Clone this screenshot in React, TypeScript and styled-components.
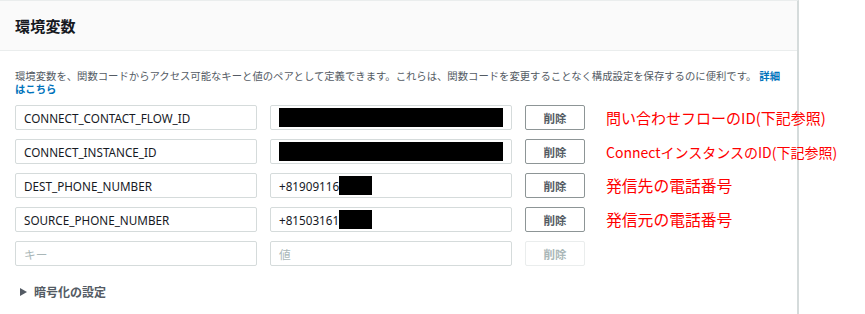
import React from 'react'
import styled, { createGlobalStyle } from 'styled-components'

const GlobalStyle = createGlobalStyle`
  html, body {
    margin: 0;
    padding: 0;
    background: #ffffff;
  }
  body {
    font-family: "Noto Sans", "Noto Sans CJK JP", sans-serif;
    color: #16191f;
  }
`

const Page = styled.div`
  width: 865px;
  height: 314px;
  overflow: hidden;
`

const Panel = styled.section`
  width: 799px;
  height: 314px;
  box-sizing: border-box;
  border-top: 1px solid #eaeded;
  border-right: 2px solid #d5dbdb;
`

const Header = styled.header`
  height: 49px;
  background: #fafafa;
  border-bottom: 1px solid #eaeded;
  display: flex;
  align-items: center;
  padding: 0 15px;
`

const Title = styled.h2`
  margin: 0;
  font-size: 15px;
  font-weight: 700;
  color: #16191f;
  letter-spacing: 0.2px;
`

const Body = styled.div`
  padding: 19px 15px 0 15px;
`

const Description = styled.p`
  margin: 0 0 9px 0;
  width: 767px;
  font-size: 10.35px;
  line-height: 13px;
  color: #545b64;
`

const Link = styled.a`
  color: #0073bb;
  font-weight: 700;
  text-decoration: none;
  margin-left: 3px;
`

const Rows = styled.div`
  display: flex;
  flex-direction: column;
  gap: 9px;
`

const Row = styled.div`
  display: flex;
  align-items: center;
  height: 25px;
`

const Field = styled.div<{ $placeholder?: boolean }>`
  flex: 0 0 242px;
  height: 25px;
  box-sizing: border-box;
  border: 1px solid #d5dbdb;
  border-radius: 2px;
  padding: 0 8px;
  display: flex;
  align-items: center;
  font-size: 11.7px;
  color: ${(p) => (p.$placeholder ? '#aab7b8' : '#16191f')};
  white-space: nowrap;
  overflow: hidden;
  & + & {
    margin-left: 13px;
  }
`

const Redact = styled.span`
  flex: none;
  display: inline-block;
  height: 19px;
  background: #000;
`

const DeleteButton = styled.button<{ $disabled?: boolean }>`
  flex: 0 0 60px;
  margin-left: 13px;
  height: 25px;
  box-sizing: border-box;
  border: 1px solid ${(p) => (p.$disabled ? '#eaeded' : '#8d9596')};
  border-radius: 2px;
  background: #fff;
  color: ${(p) => (p.$disabled ? '#aab7b8' : '#545b64')};
  font-family: "Noto Sans", "Noto Sans CJK JP", sans-serif;
  font-size: 11.5px;
  font-weight: 700;
  padding: 0;
`

const Note = styled.span<{ $size: number }>`
  flex: none;
  margin-left: 21px;
  color: #ff0000;
  font-family: "Noto Sans CJK JP", sans-serif;
  font-size: ${(p) => p.$size}px;
  white-space: nowrap;
  position: relative;
  z-index: 1;
`

const Encryption = styled.div`
  margin-top: 17px;
  padding-left: 5px;
  display: flex;
  align-items: center;
  gap: 7px;
  font-size: 12px;
  font-weight: 700;
  color: #545b64;
`

const Caret = styled.span`
  width: 0;
  height: 0;
  border-top: 4.5px solid transparent;
  border-bottom: 4.5px solid transparent;
  border-left: 7px solid #545b64;
`

type Item = {
  key: string
  value?: string
  redact?: number
  note?: string
  size: number
}

const items: Item[] = [
  { key: 'CONNECT_CONTACT_FLOW_ID', redact: 224, note: '問い合わせフローのID(下記参照)', size: 15 },
  { key: 'CONNECT_INSTANCE_ID', redact: 224, note: 'ConnectインスタンスのID(下記参照)', size: 14 },
  { key: 'DEST_PHONE_NUMBER', value: '+81909116', redact: 33, note: '発信先の電話番号', size: 15.8 },
  { key: 'SOURCE_PHONE_NUMBER', value: '+81503161', redact: 33, note: '発信元の電話番号', size: 15.8 },
]

const App: React.FC = () => {
  return (
    <Page>
      <GlobalStyle />
      <Panel>
        <Header>
          <Title>環境変数</Title>
        </Header>
        <Body>
          <Description>
            環境変数を、関数コードからアクセス可能なキーと値のペアとして定義できます。これらは、関数コードを変更することなく構成設定を保存するのに便利です。
            <Link href="#">詳細はこちら</Link>
          </Description>
          <Rows>
            {items.map((item) => (
              <Row key={item.key}>
                <Field>{item.key}</Field>
                <Field>
                  {item.value}
                  {item.redact && <Redact style={{ width: item.redact }} />}
                </Field>
                <DeleteButton>削除</DeleteButton>
                {item.note && <Note $size={item.size}>{item.note}</Note>}
              </Row>
            ))}
            <Row>
              <Field $placeholder>キー</Field>
              <Field $placeholder>値</Field>
              <DeleteButton $disabled>削除</DeleteButton>
            </Row>
          </Rows>
          <Encryption>
            <Caret />
            暗号化の設定
          </Encryption>
        </Body>
      </Panel>
    </Page>
  )
}

export default App
